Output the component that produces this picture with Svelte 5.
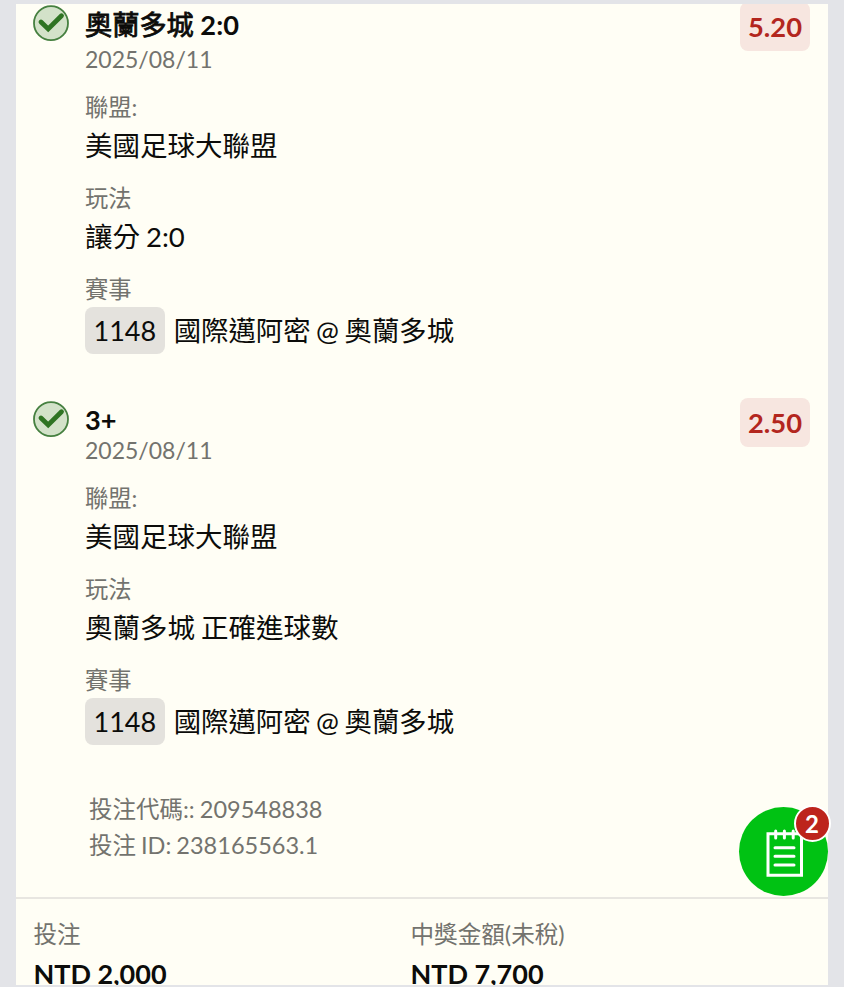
<script>
  const bets = [
    { team: '奧蘭多城', line: ' 2:0', odds: '5.20', play: '讓分 2:0' },
    { team: '', line: '3+', odds: '2.50', play: '奧蘭多城 正確進球數' }
  ];
</script>

<main>
  <section class="slip">
    {#each bets as bet}
      <article>
        <svg class="check" viewBox="0 0 38 38">
          <circle cx="19" cy="19.2" r="17" fill="#d3e2c9" stroke="#468040" stroke-width="1.8" />
          <path d="M9 18l7.2 7L29.5 11.8" fill="none" stroke="#2f7423" stroke-width="4.8" stroke-linecap="round" />
        </svg>
        <div class="details">
          <h2 class:short={!bet.team}><span>{bet.team}</span>{bet.line}</h2>
          <time>2025/08/11</time>
          <dl>
            <dt>聯盟:</dt>
            <dd>美國足球大聯盟</dd>
            <dt>玩法</dt>
            <dd>{bet.play}</dd>
            <dt>賽事</dt>
            <dd class="match"><span class="code">1148</span><span>國際邁阿密 @ 奧蘭多城</span></dd>
          </dl>
        </div>
        <span class="odds">{bet.odds}</span>
      </article>
    {/each}
    <div class="ids">
      <p>投注代碼:: 209548838</p>
      <p>投注 ID: 238165563.1</p>
    </div>
    <footer>
      <div><span>投注</span><strong>NTD 2,000</strong></div>
      <div><span>中獎金額(未稅)</span><strong>NTD 7,700</strong></div>
    </footer>
  </section>
  <button class="fab" aria-label="投注單">
    <svg viewBox="0 0 89 89" fill="none" stroke="#fff" stroke-width="3">
      <path d="M29 26.7h33.5v41.5H29z" />
      <path d="M36.7 24v7M45.4 24v7M54.2 24v7M36 40.7h19M36 49.3h19M36 58h19" stroke-linecap="round" />
    </svg>
    <span class="count">2</span>
  </button>
</main>

<style>
  :global(body) { background: #fff; }
  main {
    position: relative;
    box-sizing: border-box;
    height: 1000px;
    padding: 4px 16px 0;
    background: linear-gradient(#e3e4e8 987px, #fff 987px);
    font-family: Lato, "Noto Sans CJK TC", sans-serif;
    color: #0c0c0a;
    overflow: hidden;
  }
  .slip {
    box-sizing: border-box;
    height: 981px;
    background: #fffef5;
    overflow: hidden;
  }
  article {
    display: flex;
    padding: 0 18px 0 16px;
  }
  .check { width: 38px; height: 38px; margin-right: 15px; flex: none; }
  .details { flex: 1; height: 396px; }
  article + article .details { height: 391px; }
  h2 { margin: 0; font-size: 27.2px; line-height: 42px; height: 40px; font-weight: 700; }
  h2 span { font-weight: 400; -webkit-text-stroke: 0.8px currentColor; }
  h2.short { height: 35px; line-height: 40px; }
  time { display: block; font-size: 23px; line-height: 31px; color: #73736e; }
  dl { margin: 15px 0 0; }
  dt { font-size: 23.3px; line-height: 35px; color: #73736e; }
  dd { margin: 0 0 14px; font-size: 27.5px; line-height: 42px; word-spacing: -1px; }
  .match { display: flex; gap: 9px; line-height: 47px; font-size: 27.4px; word-spacing: -1.5px; }
  .code { padding: 0 8.5px; border-radius: 8px; background: #e4e2dd; font-size: 27px; }
  .odds {
    height: 49px;
    margin-top: -2px;
    padding: 0 8px;
    border-radius: 8px;
    background: #f7e6e0;
    color: #b3261e;
    font-size: 27.3px;
    line-height: 50px;
    font-weight: 700;
  }
  .ids { height: 105px; padding: 1px 0 0 73px; color: #73736e; font-size: 23.5px; line-height: 35.5px; word-spacing: -1px; }
  p { margin: 0; }
  footer { display: flex; padding: 17px 17.5px; border-top: 2px solid #e8e6e1; }
  footer div { width: 377px; }
  footer span { display: block; font-size: 23.6px; line-height: 36px; color: #73736e; }
  footer strong { font-size: 27px; line-height: 43px; }
  .fab {
    position: absolute;
    left: 739px;
    top: 807px;
    width: 89px;
    height: 89px;
    padding: 0;
    border: 0;
    border-radius: 50%;
    background: #00c213;
    font-family: inherit;
  }
  .fab svg { display: block; }
  .count {
    position: absolute;
    top: -2px;
    left: 54.5px;
    width: 33px;
    height: 33px;
    border: 2px solid #fff;
    border-radius: 50%;
    background: #bd241c;
    color: #fff;
    font-size: 24px;
    line-height: 34px;
    font-weight: 700;
  }
</style>
